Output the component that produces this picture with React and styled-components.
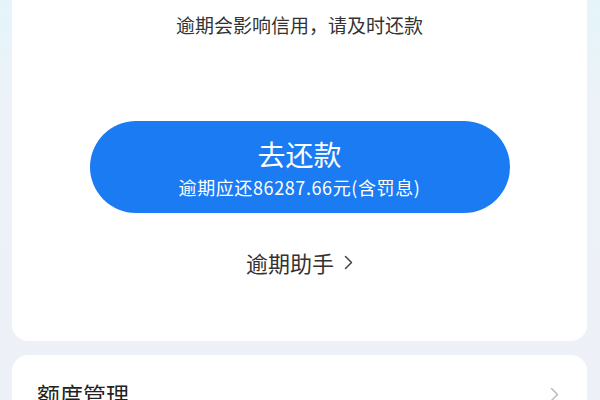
import React from "react";
import styled, { createGlobalStyle } from "styled-components";

const Global = createGlobalStyle`
  html, body { margin: 0; padding: 0; }
  body {
    font-family: "Noto Sans CJK SC", "Noto Sans", sans-serif;
    background: #eef1f7;
    overflow: hidden;
  }
`;

const Page = styled.div`
  width: 600px;
  height: 400px;
  box-sizing: border-box;
  padding: 0 13px 0 12px;
  background: linear-gradient(180deg, #e4f5fa 0%, #ecf2f8 25%, #eef0f7 100%);
  display: flex;
  flex-direction: column;
  gap: 14px;
  overflow: hidden;
`;

const Card = styled.div`
  background: #fff;
  border-radius: 16px;
  display: flex;
  flex-direction: column;
`;

const NoticeCard = styled(Card)`
  margin-top: -20px;
  padding: 32px 0 64px;
  align-items: center;
`;

const Notice = styled.div`
  font-size: 19px;
  line-height: 26px;
  color: #333;
`;

const PayButton = styled.button`
  margin-top: 83px;
  width: 420px;
  height: 92px;
  border: none;
  border-radius: 46px;
  background: #1a7bf3;
  color: #fff;
  font-family: inherit;
  display: flex;
  flex-direction: column;
  align-items: center;
  justify-content: center;
  padding: 0;
`;

const PayTitle = styled.span`
  font-size: 28px;
  line-height: 36px;
`;

const PaySub = styled.span`
  font-size: 18px;
  line-height: 24px;
  letter-spacing: 0.6px;
  margin-top: 3px;
`;

const Helper = styled.div`
  margin-top: 34px;
  display: flex;
  align-items: center;
  gap: 10px;
  font-size: 22px;
  line-height: 30px;
  color: #333;
`;

const Row = styled(Card)`
  flex-direction: row;
  align-items: center;
  justify-content: space-between;
  padding: 24px 28px 20px 25px;
`;

const RowLabel = styled.span`
  font-size: 23px;
  line-height: 30px;
  color: #222;
`;

const Chevron = ({ color = "#333", w = 9, h = 15 }) => (
  <svg width={w} height={h} viewBox="0 0 9 15" fill="none">
    <path d="M1.5 1.5 L7.5 7.5 L1.5 13.5" stroke={color} strokeWidth="1.5" strokeLinecap="round" strokeLinejoin="round" />
  </svg>
);

export default function App() {
  return (
    <>
      <Global />
      <Page>
        <NoticeCard>
          <Notice>逾期会影响信用，请及时还款</Notice>
          <PayButton>
            <PayTitle>去还款</PayTitle>
            <PaySub>逾期应还86287.66元(含罚息)</PaySub>
          </PayButton>
          <Helper>
            逾期助手
            <Chevron color="#444" />
          </Helper>
        </NoticeCard>
        <Row>
          <RowLabel>额度管理</RowLabel>
          <Chevron color="#bbb" />
        </Row>
      </Page>
    </>
  );
}
